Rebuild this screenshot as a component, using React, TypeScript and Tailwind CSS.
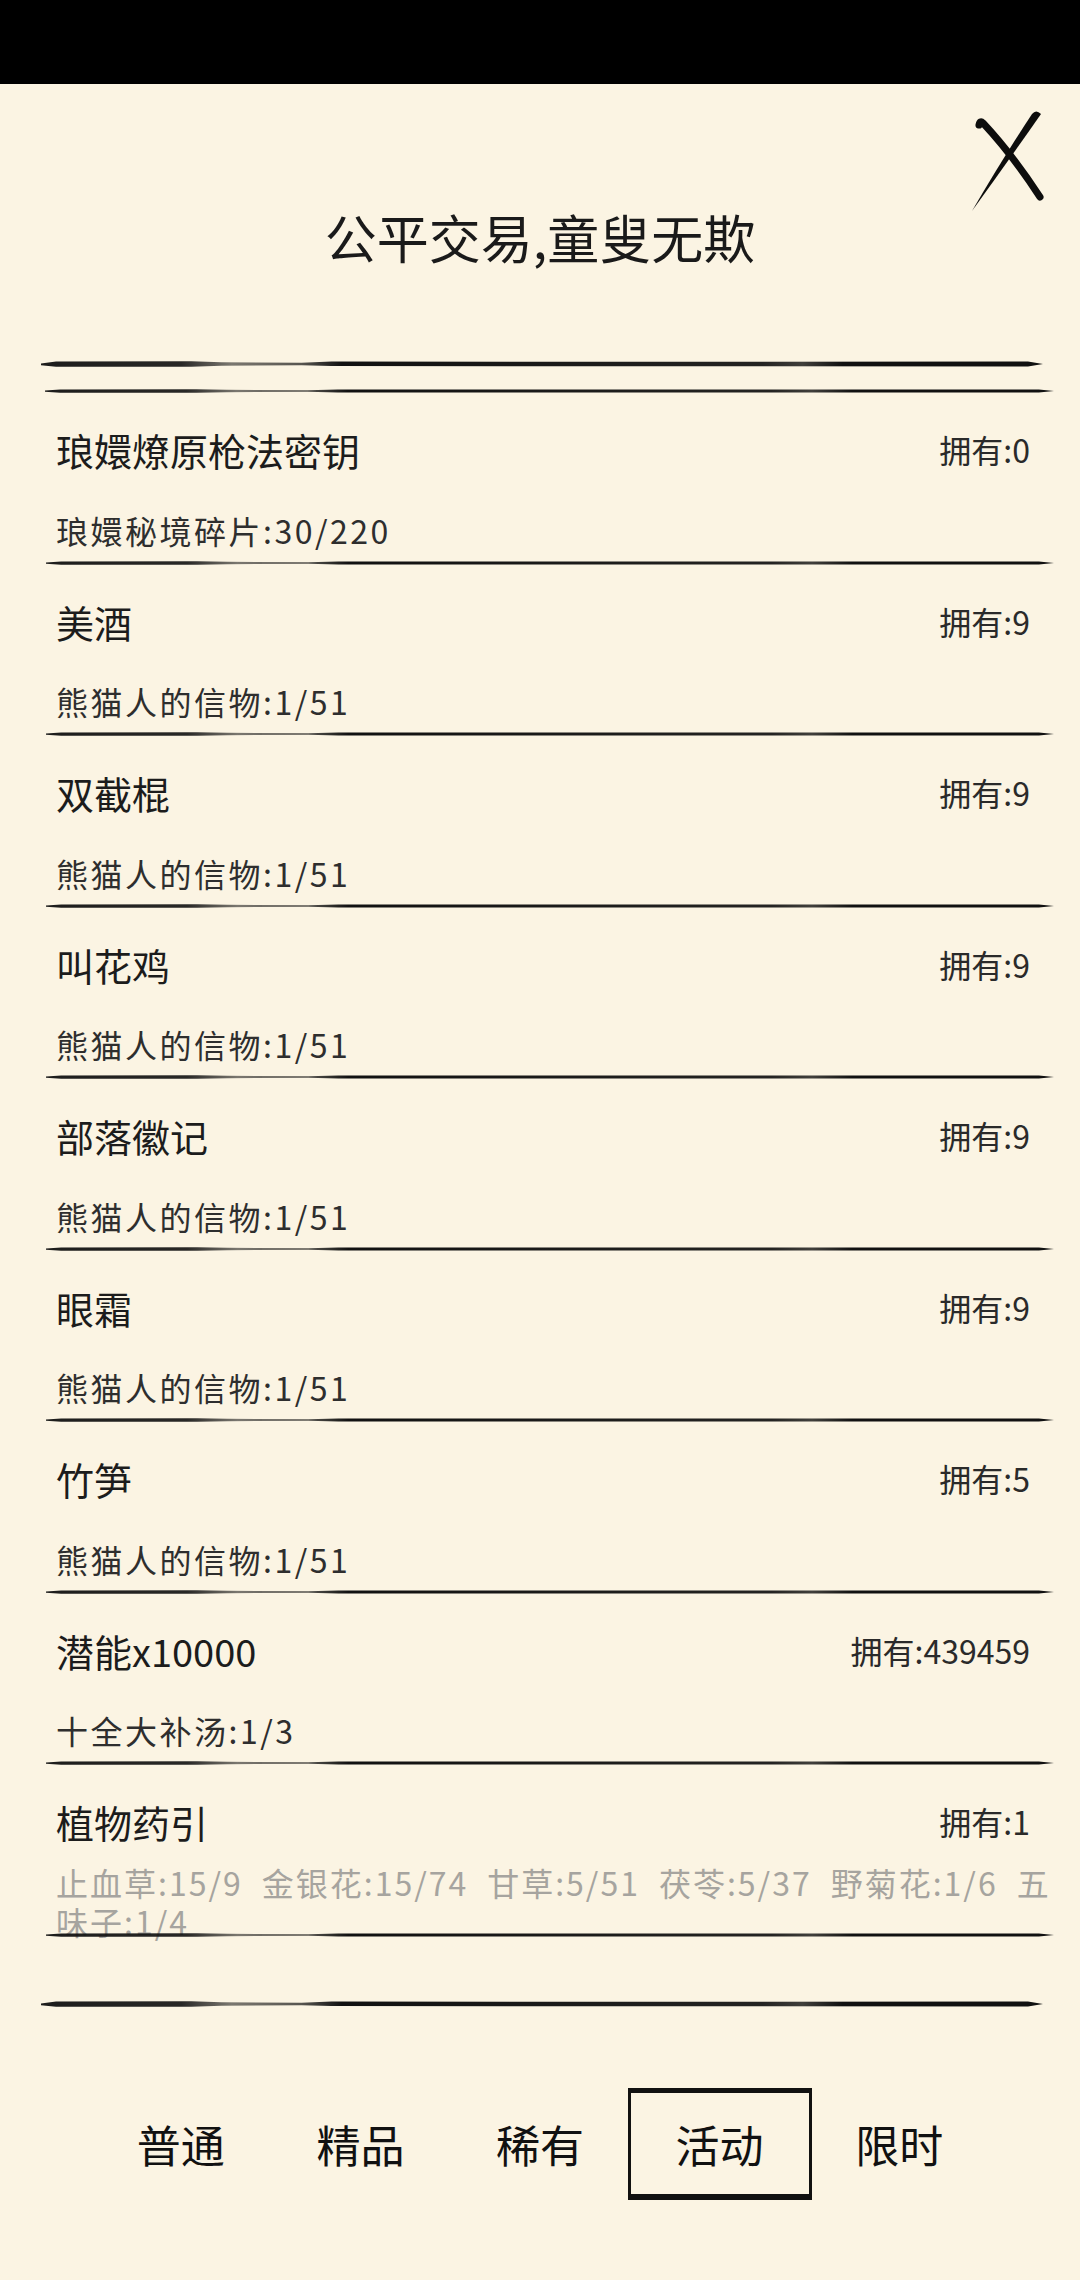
import React, { useId } from 'react';

type Item = {
  name: string;
  own: string;
  cost?: string;
  costs?: string[][];
};

const items: Item[] = [
  { name: '琅嬛燎原枪法密钥', own: '拥有:0', cost: '琅嬛秘境碎片:30/220' },
  { name: '美酒', own: '拥有:9', cost: '熊猫人的信物:1/51' },
  { name: '双截棍', own: '拥有:9', cost: '熊猫人的信物:1/51' },
  { name: '叫花鸡', own: '拥有:9', cost: '熊猫人的信物:1/51' },
  { name: '部落徽记', own: '拥有:9', cost: '熊猫人的信物:1/51' },
  { name: '眼霜', own: '拥有:9', cost: '熊猫人的信物:1/51' },
  { name: '竹笋', own: '拥有:5', cost: '熊猫人的信物:1/51' },
  { name: '潜能x10000', own: '拥有:439459', cost: '十全大补汤:1/3' },
  {
    name: '植物药引',
    own: '拥有:1',
    costs: [
      ['止血草:15/9', '金银花:15/74', '甘草:5/51', '茯苓:5/37', '野菊花:1/6', '五'],
      ['味子:1/4'],
    ],
  },
];

const tabs = ['普通', '精品', '稀有', '活动', '限时'];

// ink stroke used for every separator
const BrushLine = ({ className }: { className: string }) => {
  const id = useId();
  return (
    <svg className={className} viewBox="0 0 1000 10" preserveAspectRatio="none">
      <defs>
        <linearGradient id={id} x1="0" x2="1" y1="0" y2="0">
          <stop offset="0" stopColor="#111" stopOpacity="0.95" />
          <stop offset="0.14" stopColor="#111" stopOpacity="0.9" />
          <stop offset="0.19" stopColor="#111" stopOpacity="0.55" />
          <stop offset="0.26" stopColor="#111" stopOpacity="0.7" />
          <stop offset="0.3" stopColor="#111" stopOpacity="1" />
          <stop offset="0.72" stopColor="#111" stopOpacity="0.92" />
          <stop offset="0.76" stopColor="#111" stopOpacity="0.8" />
          <stop offset="0.8" stopColor="#111" stopOpacity="1" />
          <stop offset="1" stopColor="#111" stopOpacity="1" />
        </linearGradient>
      </defs>
      <polygon
        fill={`url(#${id})`}
        points="0,4 15,1 150,0.5 180,2 260,3 290,1 700,1.2 985,1 1000,5 985,9 700,8.8 290,8.5 260,7 180,8 150,9.5 15,9.5 0,7"
      />
    </svg>
  );
};

const CloseMark = () => (
  <svg className="absolute left-[966px] top-[26px] w-[82px] h-[104px]" viewBox="0 0 82 104">
    <path d="M13 15 Q14 10 17 13 Q46 44 74 87" fill="none" stroke="#0d0d0d" strokeWidth="7" strokeLinecap="round" />
    <path d="M66 4 Q70 -1 75 4 Q43 50 6 101 Q37 48 66 4 Z" fill="#0d0d0d" />
  </svg>
);

const App = () => {
  return (
    <div className="w-[1080px] h-[2280px] overflow-hidden bg-[#fbf4e3] font-['Noto_Sans_CJK_SC',sans-serif]">
      <div className="h-[84px] bg-black" />

      {/* Header */}
      <header className="relative h-[277px]">
        <CloseMark />
        <h1 className="pt-[123px] text-center text-[52px] leading-[60px] text-[#1a1a1a]">公平交易,童叟无欺</h1>
      </header>
      <BrushLine className="block ml-[41px] w-[1002px] h-[6px]" />
      <BrushLine className="block mt-[22px] ml-[45px] w-[1009px] h-[4px]" />

      {/* Goods list */}
      {items.map((item) => (
        <div key={item.name}>
          <div className="h-[167.5px]">
            <div className="flex items-center justify-between pt-[34px] pl-[56px] pr-[50px]">
              <span className="text-[38px] leading-[45px] text-[#1c1c1c]">{item.name}</span>
              <span className="text-[32px] leading-[45px] text-[#2a2a2a]">{item.own}</span>
            </div>
            <div className="mt-[17.5px] h-[80px] flex flex-col justify-center pl-[56px]">
              {item.cost && (
                <span className="text-[32px] leading-[40px] tracking-[2.5px] text-[#2e2e2e]">{item.cost}</span>
              )}
              {item.costs &&
                item.costs.map((line, i) => (
                  <div key={i} className="flex gap-[19px] whitespace-nowrap text-[32px] leading-[39px] tracking-[2px] text-[#a6a49f]">
                    {line.map((c) => (
                      <span key={c}>{c}</span>
                    ))}
                  </div>
                ))}
            </div>
          </div>
          <BrushLine className="relative z-10 block ml-[46px] w-[1008px] h-[4px]" />
        </div>
      ))}

      <BrushLine className="block mt-[64.5px] ml-[41px] w-[1002px] h-[6px]" />

      {/* Tabs */}
      <div className="mt-[81px] ml-[91px] w-[898px] grid grid-cols-5">
        {tabs.map((t) => (
          <div key={t} className="flex justify-center">
            <div
              className={
                t === '活动'
                  ? 'shrink-0 w-[184px] h-[112px] flex items-center justify-center border-x-[3px] border-t-[5px] border-b-[6px] border-[#111] text-[44px] leading-none text-[#111]'
                  : 'shrink-0 w-[184px] h-[112px] flex items-center justify-center text-[44px] leading-none text-[#111]'
              }
            >
              {t}
            </div>
          </div>
        ))}
      </div>
    </div>
  );
};

export default App;
